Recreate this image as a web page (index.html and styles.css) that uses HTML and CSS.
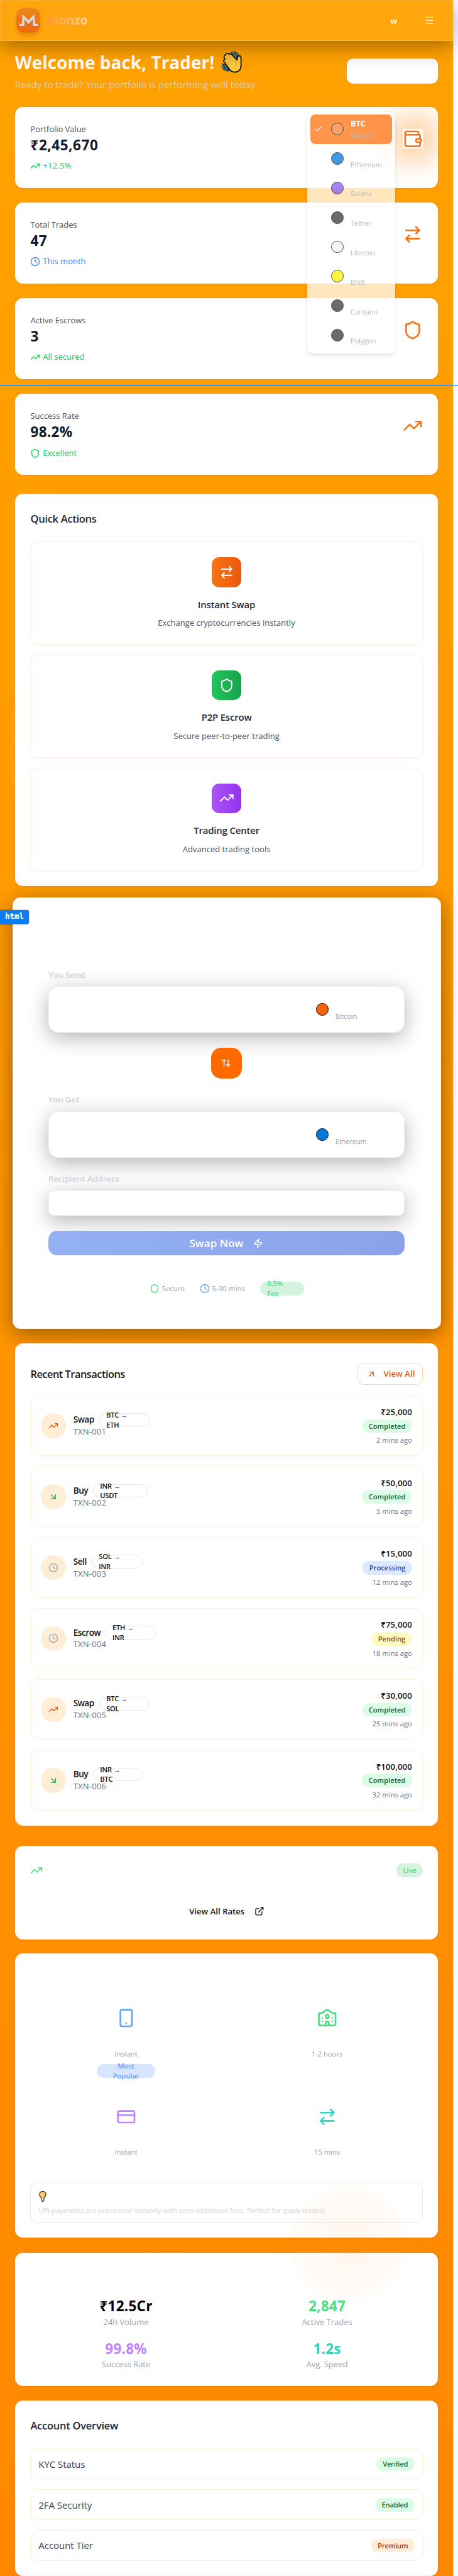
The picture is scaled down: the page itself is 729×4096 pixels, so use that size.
FILE: index.html
```html
<!DOCTYPE html>
<html lang="en">
<head>
<meta charset="utf-8">
<title>Monzo</title>
<link rel="stylesheet" href="styles.css">
</head>
<body>
<svg class="defs" aria-hidden="true">
  <symbol id="trend" viewBox="0 0 24 24"><path d="M22 7l-8.5 8.5-5-5L2 17M16 7h6v6"/></symbol>
  <symbol id="swap" viewBox="0 0 24 24"><path d="M16 3l4 4-4 4M20 7H4M8 21l-4-4 4-4M4 17h16"/></symbol>
  <symbol id="updown" viewBox="0 0 24 24"><path d="M21 16l-4 4-4-4M17 20V4M3 8l4-4 4 4M7 4v16"/></symbol>
  <symbol id="shield" viewBox="0 0 24 24"><path d="M20 13c0 5-3.5 7.5-7.66 8.95a1 1 0 0 1-.67-.01C7.5 20.5 4 18 4 13V6a1 1 0 0 1 1-1c2 0 4.5-1.2 6.24-2.72a1.17 1.17 0 0 1 1.52 0C14.51 3.81 17 5 19 5a1 1 0 0 1 1 1z"/></symbol>
  <symbol id="clock" viewBox="0 0 24 24"><circle cx="12" cy="12" r="10"/><path d="M12 6v6l4 2"/></symbol>
  <symbol id="wallet" viewBox="0 0 24 24"><path d="M19 7V4a1 1 0 0 0-1-1H5a2 2 0 0 0 0 4h15a1 1 0 0 1 1 1v4h-3a2 2 0 0 0 0 4h3a1 1 0 0 0 1-1v-2a1 1 0 0 0-1-1M3 5v14a2 2 0 0 0 2 2h15a1 1 0 0 0 1-1v-4"/></symbol>
  <symbol id="upright" viewBox="0 0 24 24"><path d="M7 7h10v10M7 17L17 7"/></symbol>
  <symbol id="downright" viewBox="0 0 24 24"><path d="M7 7l10 10M17 7v10H7"/></symbol>
  <symbol id="external" viewBox="0 0 24 24"><path d="M15 3h6v6M10 14L21 3M18 13v6a2 2 0 0 1-2 2H5a2 2 0 0 1-2-2V8a2 2 0 0 1 2-2h6"/></symbol>
  <symbol id="zap" viewBox="0 0 24 24"><path d="M4 14a1 1 0 0 1-.78-1.63l9.9-10.2a.5.5 0 0 1 .86.46l-1.92 6.02A1 1 0 0 0 13 10h7a1 1 0 0 1 .78 1.63l-9.9 10.2a.5.5 0 0 1-.86-.46l1.92-6.02A1 1 0 0 0 11 14z"/></symbol>
  <symbol id="phone" viewBox="0 0 24 24"><rect x="5" y="2" width="14" height="20" rx="2"/><path d="M12 18h.01"/></symbol>
  <symbol id="card" viewBox="0 0 24 24"><rect x="2" y="5" width="20" height="14" rx="2"/><path d="M2 10h20"/></symbol>
  <symbol id="bank" viewBox="0 0 24 24"><path d="M14 21v-3a2 2 0 0 0-4 0v3M18 12h.01M18 16h.01M22 7a1 1 0 0 0-1-1h-2a2 2 0 0 1-1.143-.359L13.143 2.36a2 2 0 0 0-2.286-.001L6.143 5.64A2 2 0 0 1 5 6H3a1 1 0 0 0-1 1v12a2 2 0 0 0 2 2h16a2 2 0 0 0 2-2zM6 12h.01M6 16h.01"/><circle cx="12" cy="10" r="2"/></symbol>
  <symbol id="check" viewBox="0 0 24 24"><path d="M20 6L9 17l-5-5"/></symbol>
  <symbol id="menu" viewBox="0 0 24 24"><path d="M2 4h20M2 12h20M2 20h20"/></symbol>
</svg>
<div class="page">
  <div class="canvas">
    <header class="header">
      <svg class="logo" viewBox="0 0 39 40">
        <defs><linearGradient id="lg" x2="0" y2="1"><stop stop-color="#ee861b"/><stop offset="1" stop-color="#ea690c"/></linearGradient></defs>
        <rect width="39" height="40" rx="12" fill="url(#lg)"/>
        <path d="M4.500 29.700V26H8L9.500 10l10 10 10-10L31 26h4v3.700h-9V20l-6.500 7.500L13 20v9.700z" fill="#d8380a" opacity=".7"/>
        <path d="M5 28.500V25h3.500L10 9.500l9.500 10 9.500-10L30.500 25H35v3.500h-8.500V18.500l-7 7.500-6.500-7.500v10z" fill="#dcd8d8"/>
      </svg>
      <span class="brand">Monzo</span>
      <span class="head-w">w</span>
      <svg class="ic menu"><use href="#menu"/></svg>
    </header>
    <section class="welcome">
      <div>
        <h1>Welcome back, Trader!
          <svg class="wave" viewBox="0 0 32 34">
            <path d="M17 2c5-1 9 2 9.500 7M18 6c3 0 4 1 5 4M1.500 21c0 6 4 9 9 9M5 22c0 3 2 5 5 5" fill="none" stroke="#111" stroke-width="3.600" stroke-linecap="round"/>
            <path d="M17 2c5-1 9 2 9.500 7M18 6c3 0 4 1 5 4M1.500 21c0 6 4 9 9 9M5 22c0 3 2 5 5 5" fill="none" stroke="#3cb0e0" stroke-width="1.500" stroke-linecap="round"/>
            <path d="M4 10c-1-2 0-4 2-4 0-3 3-4 5-2 2-1 4 0 5 1l8.500 8.500L25.500 9c.5-3 5.500-3 5.500 1v12c0 7-4 11-10 11-4 0-7-2-9-5L4 17c-2-2-1-4 1-4z" fill="#fcc53f" stroke="#111" stroke-width="1.800" stroke-linejoin="round"/>
            <path d="M6 8l9 9.500M11 6l8 9M5.500 14l7 7M25 14c-3 2-4 5-2 9" fill="none" stroke="#c98f22"/>
          </svg>
        </h1>
        <p>Ready to trade? Your portfolio is performing well today.</p>
      </div>
      <button class="ghost"></button>
    </section>
    <section class="stats">
      <article class="card stat glow"><div><p class="lab">Portfolio Value</p><p class="val rupee">₹2,45,670</p><p class="sub green"><svg class="ic s16"><use href="#trend"/></svg><span class="num">+12.5%</span></p></div><span class="big boxed"><svg class="ic s32"><use href="#wallet"/></svg></span></article>
      <article class="card stat"><div><p class="lab">Total Trades</p><p class="val">47</p><p class="sub blue"><svg class="ic s16"><use href="#clock"/></svg>This month</p></div><span class="big"><svg class="ic s32"><use href="#swap"/></svg></span></article>
      <article class="card stat"><div><p class="lab">Active Escrows</p><p class="val">3</p><p class="sub green"><svg class="ic s16"><use href="#trend"/></svg>All secured</p></div><span class="big"><svg class="ic s32"><use href="#shield"/></svg></span></article>
      <article class="card stat"><div><p class="lab">Success Rate</p><p class="val">98.2%</p><p class="sub green"><svg class="ic s16"><use href="#shield"/></svg>Excellent</p></div><span class="big"><svg class="ic s32"><use href="#trend"/></svg></span></article>
    </section>
    <section class="card quick">
      <h2>Quick Actions</h2>
      <div class="action"><span class="tile t-orange"><svg class="ic s24"><use href="#swap"/></svg></span><h3>Instant Swap</h3><p>Exchange cryptocurrencies instantly</p></div>
      <div class="action"><span class="tile t-green"><svg class="ic s24"><use href="#shield"/></svg></span><h3>P2P Escrow</h3><p>Secure peer-to-peer trading</p></div>
      <div class="action"><span class="tile t-purple"><svg class="ic s24"><use href="#trend"/></svg></span><h3>Trading Center</h3><p>Advanced trading tools</p></div>
    </section>
    <section class="card exchange">
      <label>You Send</label>
      <div class="coinbox"><i class="dot d-orange"></i><span>Bitcoin</span></div>
      <button class="flip"><svg class="ic s16"><use href="#updown"/></svg></button>
      <label>You Get</label>
      <div class="coinbox"><i class="dot d-blue"></i><span>Ethereum</span></div>
      <label class="addr">Recipient Address</label>
      <div class="field"></div>
      <button class="swapnow">Swap Now<svg class="ic s16"><use href="#zap"/></svg></button>
      <div class="facts">
        <span class="fact"><svg class="ic s16 c-green"><use href="#shield"/></svg>Secure</span>
        <span class="fact"><svg class="ic s16 c-blue"><use href="#clock"/></svg>5-30 mins</span>
        <span class="fee">0.5%<br>Fee</span>
      </div>
    </section>
    <section class="card recent">
      <div class="recent-head"><h2>Recent Transactions</h2><button class="viewall"><svg class="ic s16"><use href="#upright"/></svg>View All</button></div>
      <div class="tx"><span class="round r-orange"><svg class="ic s16"><use href="#trend"/></svg></span><div class="tx-main"><p class="kind">Swap</p><p class="id">TXN-001</p></div><span class="pair">BTC →<br>ETH</span><div class="tx-end"><b>₹25,000</b><span class="pill p-green">Completed</span><small>2 mins ago</small></div></div>
      <div class="tx"><span class="round r-green"><svg class="ic s16"><use href="#downright"/></svg></span><div class="tx-main"><p class="kind">Buy</p><p class="id">TXN-002</p></div><span class="pair buy wide">INR →<br>USDT</span><div class="tx-end"><b>₹50,000</b><span class="pill p-green">Completed</span><small>5 mins ago</small></div></div>
      <div class="tx"><span class="round r-gray"><svg class="ic s16"><use href="#clock"/></svg></span><div class="tx-main"><p class="kind">Sell</p><p class="id">TXN-003</p></div><span class="pair sell">SOL →<br>INR</span><div class="tx-end"><b>₹15,000</b><span class="pill p-blue">Processing</span><small>12 mins ago</small></div></div>
      <div class="tx"><span class="round r-gray"><svg class="ic s16"><use href="#clock"/></svg></span><div class="tx-main"><p class="kind">Escrow</p><p class="id">TXN-004</p></div><span class="pair escrow">ETH →<br>INR</span><div class="tx-end"><b>₹75,000</b><span class="pill p-yellow">Pending</span><small>18 mins ago</small></div></div>
      <div class="tx"><span class="round r-orange"><svg class="ic s16"><use href="#trend"/></svg></span><div class="tx-main"><p class="kind">Swap</p><p class="id">TXN-005</p></div><span class="pair">BTC →<br>SOL</span><div class="tx-end"><b>₹30,000</b><span class="pill p-green">Completed</span><small>25 mins ago</small></div></div>
      <div class="tx"><span class="round r-green"><svg class="ic s16"><use href="#downright"/></svg></span><div class="tx-main"><p class="kind">Buy</p><p class="id">TXN-006</p></div><span class="pair buy">INR →<br>BTC</span><div class="tx-end"><b>₹100,000</b><span class="pill p-green">Completed</span><small>32 mins ago</small></div></div>
    </section>
    <section class="card rates">
      <div class="rates-head"><svg class="ic s20 c-green"><use href="#trend"/></svg><span class="live">Live</span></div>
      <div class="rates-link">View All Rates<svg class="ic s16"><use href="#external"/></svg></div>
    </section>
    <section class="card pay">
      <div class="pay-grid">
        <div><svg class="ic s32 c-blue"><use href="#phone"/></svg><p>Instant</p><span class="popular">Most<br>Popular</span></div>
        <div><svg class="ic s32 c-green"><use href="#bank"/></svg><p>1-2 hours</p></div>
        <div><svg class="ic s32 c-purple"><use href="#card"/></svg><p>Instant</p></div>
        <div><svg class="ic s32 c-teal"><use href="#swap"/></svg><p>15 mins</p></div>
      </div>
      <div class="tip">
        <svg class="bulb" viewBox="0 0 12 17"><path d="M4 11C2 9 .8 8 .8 5.500a5.200 5 0 0 1 10.400 0C11.200 8 10 9 8 11v4a2 1.500 0 0 1-4 0z" fill="#fdc95c" stroke="#222" stroke-width="1.200"/><path d="M4.600 11.500h2.800V15H4.600z" fill="#ddd"/></svg>
        <p>UPI payments are processed instantly with zero additional fees. Perfect for quick trades!</p>
      </div>
    </section>
    <section class="card market">
      <div><b>₹12.5Cr</b><span>24h Volume</span></div>
      <div><b class="c-green">2,847</b><span>Active Trades</span></div>
      <div><b class="c-purple">99.8%</b><span>Success Rate</span></div>
      <div><b class="c-teal">1.2s</b><span>Avg. Speed</span></div>
    </section>
    <section class="card account">
      <h2>Account Overview</h2>
      <div class="acc">KYC Status<span class="pill p-green">Verified</span></div>
      <div class="acc">2FA Security<span class="pill p-green">Enabled</span></div>
      <div class="acc">Account Tier<span class="pill p-orange">Premium</span></div>
    </section>
    <div class="halo"></div>
  </div>
  <ul class="menu-list">
    <li class="on"><svg class="ic s16"><use href="#check"/></svg><i class="dot d-sel"></i><span><b>BTC</b>Bitcoin</span></li>
    <li><i class="dot d-blue"></i><span><b></b>Ethereum</span></li>
    <li><i class="dot d-violet"></i><span><b></b>Solana</span></li>
    <li><i class="dot d-black"></i><span><b></b>Tether</span></li>
    <li><i class="dot d-white"></i><span><b></b>Litecoin</span></li>
    <li><i class="dot d-yellow"></i><span><b></b>BNB</span></li>
    <li><i class="dot d-black"></i><span><b></b>Cardano</span></li>
    <li><i class="dot d-black"></i><span><b></b>Polygon</span></li>
  </ul>
  <div class="guide"></div>
  <div class="tag">html</div>
</div>
</body>
</html>
```
FILE: styles.css
```css
* { box-sizing: border-box; margin: 0; padding: 0; }
html { background: #fff; }
body { font-family: "Open Sans", "Noto Sans", sans-serif; overflow: hidden; }
button { font-family: inherit; border: 0; }
.defs { position: absolute; width: 0; height: 0; }
.page { position: relative; zoom: 0.98914; width: 737px; height: 4141px; background: #fff; overflow: hidden; }
.canvas { position: relative; width: 729px; height: 4141px; padding: 0 24px; background: linear-gradient(172deg, #ffa200 0%, #ff9a00 35%, #ff9000 65%, #ff8700 100%); box-shadow: 1px 0 #ffe9c4; }
.ic { fill: none; stroke: currentColor; stroke-width: 2; stroke-linecap: round; stroke-linejoin: round; flex: none; display: block; }
.s16 { width: 16px; height: 16px; }
.s20 { width: 20px; height: 20px; }
.s24 { width: 24px; height: 24px; }
.s32 { width: 32px; height: 32px; }
.c-green { color: #4ade80; }
.c-blue { color: #60a5fa; }
.c-purple { color: #c084fc; }
.c-teal { color: #2dd4bf; }
.card { background: #fff; border-radius: 12px; border: 1px solid #fff4e0; box-shadow: 0 1px 2px rgba(0,0,0,.06); }

.header { position: relative; height: 66px; margin: 0 -24px; padding: 0 30px 0 25px; display: flex; align-items: center; background: #ffa60f; border: 1px solid #ffb22e; box-shadow: 0 8px 32px rgba(0,0,0,.37); clip-path: inset(0 -8px -60px 0); }
.logo { width: 39px; height: 40px; border-radius: 12px; box-shadow: 0 4px 8px rgba(170,80,0,.3); }
.brand { margin-left: 12px; font-size: 19px; line-height: 28px; font-weight: 700; letter-spacing: .16px; padding-top: 1px; background: linear-gradient(90deg, #ff9838, #ffdca6); -webkit-background-clip: text; background-clip: text; color: transparent; }
.head-w { margin-left: auto; width: 11px; color: #fff6df; font-size: 13px; font-weight: 700; }
.menu { width: 15px; height: 15px; margin-left: 44px; color: #ffeccb; stroke-linecap: butt; }

.welcome { height: 106px; display: flex; justify-content: space-between; }
.welcome h1 { display: flex; align-items: center; height: 36px; margin-top: 16px; font-size: 28.200px; font-weight: 700; letter-spacing: .06px; color: #fffaf6; white-space: nowrap; }
.wave { width: 32px; height: 34px; margin-left: 12px; }
.welcome p { margin-top: 6px; height: 24px; line-height: 24px; font-size: 15.200px; color: #d8cdb8; }
.ghost { width: 147px; height: 40px; margin-top: 28px; border-radius: 10px; background: linear-gradient(#f8f8f8, #fff 50%); }

.stats { display: flex; flex-direction: column; gap: 23.800px; height: 590px; }
.stat { flex: 1; display: flex; justify-content: space-between; padding: 24px; }
.lab { font-size: 13.200px; line-height: 21px; letter-spacing: -.07px; color: #4b5563; }
.val { font-size: 22.800px; line-height: 31px; font-weight: 700; letter-spacing: .27px; color: #111827; }
.rupee { letter-spacing: .53px; }
.sub { margin-top: 8px; display: flex; align-items: center; gap: 4px; font-size: 13.200px; line-height: 20px; letter-spacing: -.04px; }
.num { letter-spacing: .24px; }
.green { color: #22c55e; }
.blue { color: #3b82f6; }
.big { height: 32px; margin-top: 10px; color: #f97316; }
.boxed { background: #fff; }
.glow { background: radial-gradient(circle 76px at 641px 50px, #ffd0a0 0%, #ffe2c6 35%, #fff6ec 70%, #fff 100%); }

.quick { height: 631px; margin-top: 32px; padding: 24px; display: flex; flex-direction: column; gap: 16px; }
h2 { font-size: 16.800px; line-height: 30px; font-weight: 600; letter-spacing: -.35px; color: #1f2937; }
.quick h2 { height: 36px; }
.action { flex: 1; border: 1px solid #fff1e3; border-radius: 12px; box-shadow: 0 1px 2px rgba(0,0,0,.05); display: flex; flex-direction: column; align-items: center; padding-top: 24px; }
.tile { width: 48px; height: 48px; border-radius: 12px; display: grid; place-items: center; color: #fff; }
.t-orange { background: linear-gradient(90deg, #f97316, #ea580c); }
.t-green { background: linear-gradient(90deg, #22c55e, #16a34a); }
.t-purple { background: linear-gradient(90deg, #a855f7, #9333ea); }
.action h3 { margin-top: 16px; font-size: 15.200px; line-height: 24px; font-weight: 600; letter-spacing: -.22px; color: #1f2937; }
.action p { margin-top: 8px; font-size: 13.200px; line-height: 20px; color: #4b5563; }

.exchange { height: 694px; margin: 17.500px -4.500px 0 -4px; padding: 113px 57.500px 0 56.500px; border-radius: 12px; display: flex; flex-direction: column; box-shadow: 0 8px 32px rgba(0,0,0,.4); }
.exchange label { height: 22px; margin-bottom: 7px; font-size: 13.400px; line-height: 22px; font-weight: 600; letter-spacing: -.1px; color: #d1d5db; }
.coinbox, .field { border-radius: 16px; background: #fff; border: 1px solid #f2f2f2; box-shadow: 0 8px 32px rgba(0,0,0,.3); flex: none; }
.coinbox { position: relative; height: 75px; display: flex; align-items: center; padding-left: 430px; }
.coinbox span { margin: 22px 0 0 11px; font-size: 11.400px; line-height: 18px; letter-spacing: -.22px; color: #9ca3af; }
.dot { width: 20px; height: 20px; border-radius: 50%; border: 1px solid #111; flex: none; }
.d-orange { background: #f7630c; }
.d-blue { background: #0078d7; }
.d-violet { background: #8360e8; }
.d-black { background: #383838; }
.d-white { background: #f2f2f2; }
.d-yellow { background: #fff000; }
.flip { position: relative; width: 49px; height: 49px; margin: 24px auto 24px; border-radius: 16px; background: #ff6a00; color: #fff; display: grid; place-items: center; flex: none; }
.exchange .addr { margin-top: 23px; position: relative; }
.field { height: 41px; border-radius: 10px; }
.swapnow { position: relative; height: 40px; margin-top: 24px; border-radius: 14px; background: linear-gradient(100deg, #93b1f4, #8aa2e9); color: #fff; font-size: 17.200px; font-weight: 600; letter-spacing: .05px; display: flex; align-items: center; justify-content: center; gap: 16px; flex: none; }
.facts { height: 22px; margin-top: 42px; display: flex; align-items: center; gap: 24px; padding-left: 163px; font-size: 11.600px; color: #9ca3af; white-space: nowrap; }
.fact { display: flex; align-items: center; gap: 4px; }
.fee { width: 71px; height: 22px; padding-left: 11.500px; border-radius: 11px; background: #d4f3df; color: #4ade80; line-height: 16px; font-weight: 600; font-size: 11.300px; display: flex; align-items: center; }

.recent { height: 775px; margin-top: 23px; padding: 30px 24px 24px; display: flex; flex-direction: column; gap: 17px; }
.recent-head { display: flex; justify-content: space-between; align-items: center; height: 36px; }
.recent h2 { font-size: 16.600px; letter-spacing: -.52px; color: #18181b; }
.viewall { width: 105px; height: 36px; border: 1px solid #fed7aa; border-radius: 10px; background: #fff; color: #ea580c; font-size: 13.200px; font-weight: 600; letter-spacing: .08px; display: flex; align-items: center; justify-content: center; gap: 12px; padding-left: 2px; white-space: nowrap; }
.tx { height: 97px; flex: none; border: 1px solid #fff1e0; border-radius: 12px; padding: 0 16px; display: flex; align-items: center; position: relative; }
.round { width: 40px; height: 40px; border-radius: 50%; background: #ffedd5; display: grid; place-items: center; margin-right: 12px; }
.r-orange { color: #ea580c; }
.r-green { color: #16a34a; }
.r-gray { color: #9ca3af; }
.tx p { font-size: 13.200px; line-height: 20px; }
.tx .kind { font-size: 13.800px; font-weight: 600; letter-spacing: -.5px; color: #111; }
.tx .id { letter-spacing: .19px; color: #6b7280; }
.pair { position: absolute; left: 110px; top: 27px; width: 81px; height: 22px; border: 1px solid #e5e7eb; border-radius: 11px; padding-left: 10px; font-size: 11.300px; line-height: 16px; font-weight: 600; letter-spacing: -.25px; color: #111; display: flex; align-items: center; white-space: nowrap; }
.buy { left: 100px; width: 79px; }
.wide { width: 88px; }
.sell { left: 98px; }
.escrow { left: 120px; }
.tx-end { margin-left: auto; display: flex; flex-direction: column; align-items: flex-end; }
.tx-end b { font-size: 13.400px; line-height: 22px; font-weight: 600; letter-spacing: .06px; color: #111; }
.pill { height: 22px; padding: 0 10.500px; border-radius: 11px; font-size: 11.300px; line-height: 22px; font-weight: 600; }
.p-green { background: #dcfce7; color: #166534; }
.p-blue { background: #dbeafe; color: #1e40af; }
.p-yellow { background: #fef9c3; color: #854d0e; }
.p-orange { background: #ffedd5; color: #9a3412; }
.tx-end small { margin-top: 4px; font-size: 11.500px; line-height: 17px; letter-spacing: -.07px; color: #6b7280; }

.rates { height: 150px; margin-top: 33px; padding: 27px 24px; }
.rates-head { display: flex; justify-content: space-between; align-items: center; height: 22px; }
.live { height: 22px; padding: 0 10.500px; border-radius: 11px; background: #d4f3df; color: #4ade80; font-size: 11.300px; line-height: 22px; font-weight: 600; letter-spacing: -.2px; }
.rates-link { margin-top: 45px; height: 20px; padding-left: 1px; display: flex; align-items: center; justify-content: center; gap: 16px; font-size: 13.200px; font-weight: 600; letter-spacing: .04px; color: #111; }

.pay { height: 457px; margin-top: 23px; padding: 87px 24px 0; }
.pay-grid { display: grid; grid-template-columns: 1fr 1fr; grid-template-rows: 158px 121px; column-gap: 16px; height: 279px; }
.pay-grid > div { display: flex; flex-direction: column; align-items: center; }
.pay-grid p { margin-top: 32px; font-size: 11.500px; line-height: 18px; letter-spacing: -.1px; color: #9ca3af; }
.popular { width: 94px; height: 22px; margin-top: 8px; border-radius: 11px; background: #d7e6fe; color: #60a5fa; font-size: 11.300px; line-height: 16px; font-weight: 600; letter-spacing: -.09px; display: flex; align-items: center; justify-content: center; text-align: center; }
.tip { height: 65px; border: 1px solid #e5e7eb; border-radius: 12px; padding: 14px 12px; }
.bulb { display: block; width: 12px; height: 17px; margin-left: 1px; }
.tip p { margin-top: 5px; font-size: 11.450px; line-height: 18px; letter-spacing: -.08px; color: #d1d5db; white-space: nowrap; }

.market { height: 214px; margin-top: 24px; padding: 68px 24px 0; display: grid; grid-template-columns: 1fr 1fr; grid-template-rows: 68px 68px; column-gap: 16px; }
.market > div { display: flex; flex-direction: column; align-items: center; }
.market b { font-size: 22.800px; line-height: 34px; letter-spacing: .21px; font-weight: 700; }
.market span { font-size: 13.200px; line-height: 17px; letter-spacing: -.06px; color: #9ca3af; }

.account { height: 282px; margin-top: 24px; padding: 24px; display: flex; flex-direction: column; gap: 16.500px; }
.account h2 { height: 36px; font-size: 16.600px; letter-spacing: -.21px; }
.acc { height: 49px; flex: none; border: 1px solid #ffedd5; border-radius: 12px; padding: 0 12px; display: flex; align-items: center; justify-content: space-between; font-size: 15.200px; color: #374151; letter-spacing: -.06px; }
.acc .pill { letter-spacing: -.2px; }
.halo { position: absolute; left: 454px; top: 3500px; width: 212px; height: 212px; background: radial-gradient(circle, rgba(255,140,50,.09), rgba(255,140,50,.035) 55%, rgba(255,140,50,0) 98px); }

.menu-list { position: absolute; left: 494px; top: 180px; width: 142px; height: 388px; padding: 4px 5px; list-style: none; border-radius: 10px; background: rgba(255,255,255,.74); box-shadow: 0 4px 8px rgba(0,0,0,.1); }
.menu-list li { position: relative; height: 47.300px; display: flex; align-items: center; padding-left: 34px; opacity: .74; }
.menu-list .on { border-radius: 8px; background: #ff6f0d; }
.menu-list .ic { position: absolute; left: 7px; top: 16px; color: #fff; width: 14px; height: 14px; }
.menu-list span { margin-left: 11px; font-size: 11.400px; line-height: 18px; letter-spacing: -.22px; color: #9ca3af; }
.menu-list b { display: block; height: 19px; color: #fff; font-size: 13.200px; line-height: 19px; letter-spacing: -.3px; }
.d-sel { background: #f77c35; }
.guide { position: absolute; left: 0; top: 619px; width: 737px; height: 1px; background: #0878e0; }
.tag { position: absolute; left: 0; top: 1463px; width: 47px; height: 22px; padding-left: 8px; border-radius: 0 3px 3px 0; background: #0a7cf4; color: #fff; font: 700 13px/21px "DejaVu Sans Mono", monospace; letter-spacing: -.3px; box-shadow: 0 1px 3px rgba(0,0,0,.4); }
```
